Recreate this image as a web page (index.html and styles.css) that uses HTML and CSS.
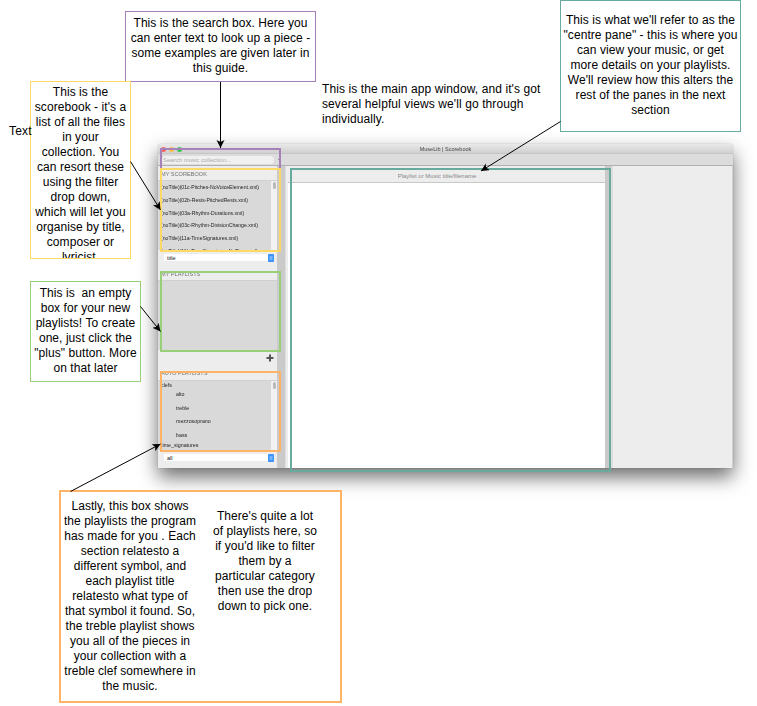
FILE: index.html
```html
<!DOCTYPE html>
<html lang="en">
<head>
<meta charset="utf-8">
<title>MuseLib guide</title>
<link rel="stylesheet" href="styles.css">
</head>
<body>
<main class="canvas">
  <section class="window">
    <header class="titlebar">
      <span class="lights"><i class="red"></i><i class="amber"></i><i class="green"></i></span>
      <span class="title">MuseLib | Scorebook</span>
    </header>
    <div class="toolbar"><div class="search">Search music collection...</div><span class="dash"></span></div>
    <div class="panes">
      <aside class="sidebar">
        <h2 class="first">MY SCOREBOOK</h2>
        <div class="list">
          <ul class="files">
            <li>(noTitle)(01c-Pitches-NoVoiceElement.xml)</li>
            <li>(noTitle)(02b-Rests-PitchedRests.xml)</li>
            <li>(noTitle)(03a-Rhythm-Durations.xml)</li>
            <li>(noTitle)(03c-Rhythm-DivisionChange.xml)</li>
            <li>(noTitle)(11a-TimeSignatures.xml)</li>
            <li>(noTitle)(11b-TimeSignatures-NoTime.xml)</li>
          </ul>
          <span class="scroll"><i></i></span>
        </div>
        <div class="select">title<svg viewBox="0 0 6 8"><path d="M1.5 3h3M1.5 5h3"/></svg></div>
        <h2 class="second">MY PLAYLISTS</h2>
        <div class="list"></div>
        <div class="add"><svg viewBox="0 0 8 8"><path d="M4 .5v7M.5 4h7"/></svg></div>
        <h2 class="third">AUTO PLAYLISTS</h2>
        <div class="list">
          <ul class="tree">
            <li class="group">clefs</li><li>alto</li><li>treble</li><li>mezzosoprano</li><li>bass</li><li class="group last">time_signatures</li>
          </ul>
          <span class="scroll"><i></i></span>
        </div>
        <div class="select">all<svg viewBox="0 0 6 8"><path d="M1.5 3h3M1.5 5h3"/></svg></div>
      </aside>
      <div class="divider"></div>
      <article class="centre"><h2>Playlist or Music title/filename</h2></article>
      <div class="divider right"></div>
      <div class="empty"></div>
    </div>
  </section>

  <div class="frame f-search"></div>
  <div class="frame f-score"></div>
  <div class="frame f-play"></div>
  <div class="frame f-auto"></div>
  <div class="frame f-centre"></div>

  <div class="note n-search">This is the search box. Here you<br>can enter text to look up a piece -<br>some examples are given later in<br>this guide.</div>
  <div class="note n-score">This is the<br>scorebook - it's a<br>list of all the files<br>in your<br>collection. You<br>can resort these<br>using the filter<br>drop down,<br>which will let you<br>organise by title,<br>composer or<br>lyricist.</div>
  <div class="note n-play">This is&nbsp; an empty<br>box for your new<br>playlists! To create<br>one, just click the<br>"plus" button. More<br>on that later</div>
  <div class="note n-centre">This is what we'll refer to as the<br>"centre pane" - this is where you<br>can view your music, or get<br>more details on your playlists.<br>We'll review how this alters the<br>rest of the panes in the next<br>section</div>
  <div class="note n-auto">
    <p>Lastly, this box shows<br>the playlists the program<br>has made for you . Each<br>section relatesto a<br>different symbol, and<br>each playlist title<br>relatesto what type of<br>that symbol it found. So,<br>the treble playlist shows<br>you all of the pieces in<br>your collection with a<br>treble clef somewhere in<br>the music.</p>
    <p class="second-note">There's quite a lot<br>of playlists here, so<br>if you'd like to filter<br>them by a<br>particular category<br>then use the drop<br>down to pick one.</p>
  </div>
  <p class="label l-main">This is the main app window, and it's got<br>several helpful views we'll go through<br>individually.</p>
  <p class="label l-text">Text</p>

  <svg class="arrows" viewBox="0 0 757 706">
    <defs>
      <marker id="head" markerUnits="userSpaceOnUse" markerWidth="10" markerHeight="10" refX="8" refY="4" orient="auto"><path d="M8 4L0 8L2 4L0 0Z"/></marker>
    </defs>
    <g marker-end="url(#head)">
      <path marker-end="url(#head)" d="M220.5 82V148"/>
      <path marker-end="url(#head)" d="M130.500 161.500L160.500 210"/>
      <path marker-end="url(#head)" d="M140.500 306.500L160.500 331.500"/>
      <path marker-end="url(#head)" d="M70.500 491.500L160.500 444"/>
      <path marker-end="url(#head)" d="M560.500 121.500L481 171"/>
    </g>
  </svg>
</main>
</body>
</html>
```

FILE: styles.css
```css
* { box-sizing: border-box; }
body { margin: 0; background: #fff; color: #000; font-family: "Liberation Sans", Arial, sans-serif; }
h2, p, ul { margin: 0; padding: 0; font-weight: normal; }
li { list-style: none; }
.canvas { position: relative; width: 757px; height: 706px; overflow: hidden; }

.window {
  position: absolute; left: 158px; top: 144px; width: 575px; height: 324px;
  display: flex; flex-direction: column; background: #ededed;
  border-radius: 3px 3px 0 0; font-size: 5.5px;
  box-shadow: 0 9px 19px rgba(0, 0, 0, .58), 0 0 1px rgba(0, 0, 0, .4);
}
.titlebar {
  height: 10px; display: grid; place-items: center; position: relative;
  background: linear-gradient(#e9e9e9, #d0d0d0); border-bottom: 1px solid #c6c6c6;
  border-radius: 3px 3px 0 0; color: #444;
}
.title { filter: blur(.3px); line-height: 10px; }
.lights { position: absolute; left: 3px; top: 3px; display: flex; gap: 3px; }
.lights i { width: 5px; height: 5px; border-radius: 50%; filter: blur(.4px); }
.red { background: #fc605b; }
.amber { background: #fdbc40; }
.green { background: #34c84a; }
.toolbar {
  height: 12px; display: flex; align-items: center; gap: 4px; padding-left: 4px;
  background: #dcdcdc; border-bottom: 1px solid #b0b0b0;
}
.search {
  width: 112px; height: 8px; padding-left: 1px; border-radius: 4px; background: #f0f0f0;
  color: #aaa; font-size: 6px; line-height: 8px;
}
.dash { width: 3px; height: 1px; background: #888; }
.panes { flex: 1; display: flex; min-height: 0; }
.sidebar { width: 119px; overflow: hidden; }
.sidebar h2 { padding-left: 3px; color: #707070; font-size: 5.6px; white-space: nowrap; filter: blur(.25px); }
.first { height: 14px; line-height: 17px; }
.second { height: 19px; line-height: 27px; }
.third { height: 15px; line-height: 17px; }
.list { height: 70px; display: flex; justify-content: space-between; background: #d9d9d9; border-top: 1px solid #d0d0d0; overflow: hidden; }
.files, .tree { flex: 1; padding-left: 3px; color: #222; white-space: nowrap; filter: blur(.35px); }
.files li { height: 12.75px; line-height: 13px; font-size: 5.15px; }
.tree li { height: 13.6px; line-height: 13.6px; padding-left: 15px; font-size: 5.3px; }
.tree .group { height: 7px; line-height: 8px; padding-left: 0; }
.tree .last { line-height: 6px; }
.scroll { width: 6px; padding: 1px; background: #f2f2f2; }
.scroll i { display: block; width: 3px; height: 7px; margin-left: 1px; border-radius: 2px; background: #bababa; }
.select {
  width: 110px; height: 7px; margin: 4px 0 0 6px; padding-left: 3px;
  display: flex; justify-content: space-between; align-items: center;
  background: #fff; color: #111; font-size: 5.5px;
}
.select svg { width: 6px; height: 8px; background: #3b94fa; border-radius: 1px; fill: none; stroke: #cfe6ff; stroke-width: .8; }
.add { height: 15px; padding: 4px 3px 0 0; text-align: right; }
.add svg { display: inline-block; width: 8px; height: 8px; vertical-align: top; stroke: #555; stroke-width: 2; filter: blur(.25px); }
.divider { width: 9px; background: #cacaca; border-right: 1px solid #dedede; }
.centre { flex: none; width: 319px; background: #fff; border-left: 2px solid #ededed; }
.centre h2 { height: 17px; padding-right: 19px; line-height: 20px; text-align: center; background: #ededed; border-bottom: 1px solid #c8c8c8; color: #888; font-size: 5.9px; letter-spacing: .04px; }
.right { width: 8px; border-right: 2px solid #dedede; }
.empty { flex: 1; background: #ededed; border-right: 1px solid #d2d2d2; }

.frame { position: absolute; border: 2px solid; }
.f-search { left: 160px; top: 148px; width: 121px; height: 20px; border-color: #a680b8; border-bottom: 0; }
.f-score { left: 160px; top: 168px; width: 121px; height: 84px; border-color: #ffd966; }
.f-play { left: 160px; top: 271px; width: 121px; height: 81px; border-color: #97d077; }
.f-auto { left: 160px; top: 371px; width: 121px; height: 81px; border-color: #ffb366; }
.f-centre { left: 290px; top: 168px; width: 321px; height: 304px; border-color: #67ab9f; }

.note, .label { position: absolute; font-size: 12px; line-height: 15px; letter-spacing: .06px; white-space: nowrap; }
.note { background: #fff; border: 1px solid; text-align: center; overflow: hidden; color: #000; }
.n-search { left: 125px; top: 11px; width: 191px; height: 71px; padding-top: 4px; border-color: #a680b8; }
.n-score { left: 30px; top: 81px; width: 101px; height: 178px; padding-top: 3px; border-color: #ffd966; }
.n-play { left: 30px; top: 281px; width: 111px; height: 101px; padding-top: 4px; border-color: #97d077; }
.n-centre { left: 560px; top: 0; width: 181px; height: 132px; padding-top: 12px; border-color: #67ab9f; }
.n-auto { left: 59px; top: 490px; width: 283px; height: 213px; padding: 7px 0 0 2px; border: 2px solid #ffb366; display: flex; }
.n-auto p { width: 134px; }
.n-auto .second-note { width: 110px; margin: 10px 0 0 13px; }
.l-main { left: 322px; top: 82px; letter-spacing: .1px; }
.l-text { left: 9px; top: 124px; letter-spacing: .2px; }
.arrows { position: absolute; inset: 0; width: 757px; height: 706px; fill: none; stroke: #000; }
.arrows marker path { fill: #000; stroke: none; }
```
